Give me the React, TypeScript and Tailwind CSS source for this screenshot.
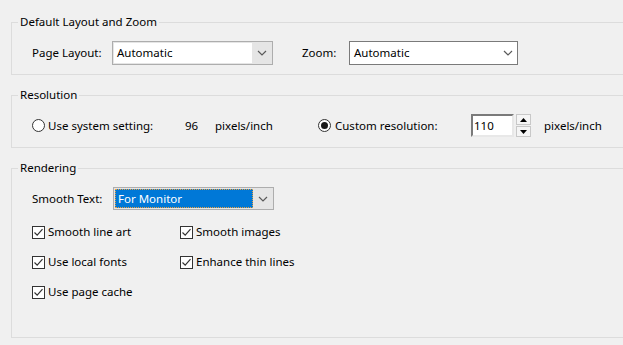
const Chevron = () => (
  <svg width="10" height="6" viewBox="0 0 10 6" className="block">
    <path d="M1 1 L5 5 L9 1" fill="none" stroke="#5a5a5a" strokeWidth="1.2" />
  </svg>
);

const Checkbox = ({ label }: { label: string }) => (
  <label className="flex items-center h-[16px]">
    <span className="w-[13px] h-[13px] border border-[#333] bg-white flex items-center justify-center">
      <svg width="11" height="11" viewBox="0 0 11 11">
        <path d="M1.5 5.5 L4.2 8.2 L9.5 2.2" fill="none" stroke="#333" strokeWidth="1.2" />
      </svg>
    </span>
    <span className="ml-[3px]">{label}</span>
  </label>
);

const Radio = ({ checked }: { checked?: boolean }) => (
  <span className="w-[13px] h-[13px] rounded-full border border-[#333] bg-white flex items-center justify-center">
    {checked && <span className="w-[7px] h-[7px] rounded-full bg-[#1a1a1a]" />}
  </span>
);

const Group = ({ title, children }: { title: string; children: React.ReactNode }) => (
  <fieldset className="border border-[#dcdcdc] ml-[11px] w-[640px] pl-[6px]">
    <legend className="px-[2px] leading-[16px]">{title}</legend>
    {children}
  </fieldset>
);

export default function App() {
  return (
    <div
      className="w-[623px] h-[345px] overflow-hidden bg-[#f0f0f0] text-[11.5px] text-black pt-[14px]"
      style={{ fontFamily: '"Noto Sans", "Liberation Sans", sans-serif' }}
    >
      <Group title="Default Layout and Zoom">
        <div className="flex items-center pl-[14px] pt-[11px] pb-[9px]">
          <span className="w-[80px]">Page Layout:</span>
          <div className="w-[161px] h-[24px] border border-[#adadad] bg-[#e5e5e5] p-[1px] flex">
            <div className="flex-1 bg-white pl-[3px] flex items-center">Automatic</div>
            <div className="w-[19px] flex items-center justify-center">
              <Chevron />
            </div>
          </div>
          <span className="ml-[29px] w-[47px]">Zoom:</span>
          <div className="w-[169px] h-[24px] border border-[#7a7a7a] bg-white flex">
            <div className="flex-1 pl-[4px] flex items-center">Automatic</div>
            <div className="w-[19px] flex items-center justify-center">
              <Chevron />
            </div>
          </div>
        </div>
      </Group>

      <div className="h-[12px]" />

      <Group title="Resolution">
        <div className="flex items-center pl-[14px] pt-[11px] pb-[10px]">
          <Radio />
          <span className="ml-[3px] w-[137px]">Use system setting:</span>
          <span className="w-[30px]">96</span>
          <span className="w-[103px]">pixels/inch</span>
          <Radio checked />
          <span className="ml-[4px] w-[136px]">Custom resolution:</span>
          <div className="w-[43px] h-[23px] border-2 border-[#7a7a7a] border-r-[#e8e8e8] border-b-[#e8e8e8] bg-white pl-[1px] flex items-center">
            110
          </div>
          <div className="ml-[2px] w-[15px] h-[23px] flex flex-col gap-[1px]">
            <div className="flex-1 border border-[#c8c8c8] bg-[#f5f5f5] flex items-center justify-center">
              <svg width="7" height="4" viewBox="0 0 7 4"><path d="M0 4 L3.5 0 L7 4 Z" fill="#000" /></svg>
            </div>
            <div className="flex-1 border border-[#c8c8c8] bg-[#f5f5f5] flex items-center justify-center">
              <svg width="7" height="4" viewBox="0 0 7 4"><path d="M0 0 L3.5 4 L7 0 Z" fill="#000" /></svg>
            </div>
          </div>
          <span className="ml-[13px]">pixels/inch</span>
        </div>
      </Group>

      <div className="h-[12px]" />

      <Group title="Rendering">
        <div className="pl-[14px] pt-[11px] h-[150px] box-content">
          <div className="flex items-center">
            <span className="w-[81px]">Smooth Text:</span>
            <div className="w-[161px] h-[23px] border border-[#adadad] bg-[#e5e5e5] p-[1px] flex">
              <div className="flex-1 bg-[#0078d7] text-white border border-dotted border-[#e8a040] pl-[2px] flex items-center">
                For Monitor
              </div>
              <div className="w-[19px] flex items-center justify-center">
                <Chevron />
              </div>
            </div>
          </div>
          <div className="mt-[14px] grid grid-cols-[148px_1fr] gap-y-[14px]">
            <Checkbox label="Smooth line art" />
            <Checkbox label="Smooth images" />
            <Checkbox label="Use local fonts" />
            <Checkbox label="Enhance thin lines" />
            <Checkbox label="Use page cache" />
          </div>
        </div>
      </Group>
    </div>
  );
}
